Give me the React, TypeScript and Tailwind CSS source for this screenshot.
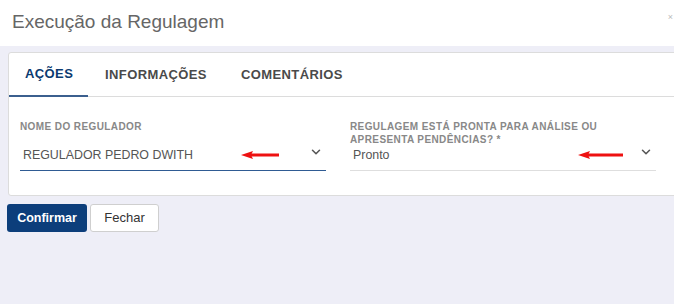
import { ChevronDown } from 'lucide-react';

const TABS = ['AÇÕES', 'INFORMAÇÕES', 'COMENTÁRIOS'];

function RedArrow({ width }: { width: number }) {
    return (
        <svg width={width} height="10" viewBox={`0 0 ${width} 10`} className="shrink-0">
            <path d={`M${width} 5 L10 5`} stroke="#ee1111" strokeWidth="3" />
            <path d="M0 5 L12 1 L10 5 L12 9 Z" fill="#ee1111" />
        </svg>
    );
}

function SelectField({
    label,
    value,
    active,
    arrow,
    arrowLeft,
}: {
    label: React.ReactNode;
    value: string;
    active?: boolean;
    arrow: number;
    arrowLeft: number;
}) {
    return (
        <div className="w-[306px] flex flex-col">
            <div className="h-[20px] text-[10px] font-bold leading-[13px] tracking-[0.4px] text-[#888]">{label}</div>
            <div
                className={`relative h-[31px] flex items-center border-b ${active ? 'border-[#2f5b93]' : 'border-[#dedede]'}`}
            >
                <span className="text-[12.4px] text-[#555] pl-[3px] pt-[1px]">{value}</span>
                <span className="absolute top-[10px]" style={{ left: arrowLeft }}>
                    <RedArrow width={arrow} />
                </span>
                <ChevronDown size={14} strokeWidth={2.6} className="absolute right-[3px] top-[5px] text-[#555]" />
            </div>
        </div>
    );
}

export default function App() {
    return (
        <div
            className="w-[674px] h-[304px] overflow-hidden bg-[#eeeef7] text-[#333]"
            style={{ fontFamily: '"Liberation Sans", Arial, sans-serif' }}
        >
            <div className="h-[46px] bg-white flex items-center justify-between pl-[12px]">
                <h1 className="text-[19px] text-[#666] leading-none pb-[4px]">Execução da Regulagem</h1>
                <span className="text-[9px] text-[#bbb] mr-[1px] mb-[10px]">×</span>
            </div>

            <div className="ml-[8px] mt-[6px] w-[680px] bg-white border border-[#dcdcdc] rounded-[3px]">
                <div className="flex border-b border-[#dcdcdc] h-[44px]">
                    {TABS.map((t, i) => (
                        <div
                            key={t}
                            className={`flex items-center text-[13px] font-bold tracking-[0.4px] ${
                                i === 0
                                    ? 'px-[16px] text-[#0b3a70] border-b-2 border-[#3b5f8e] -mb-px w-[79px]'
                                    : 'text-[#4a4a4a] px-[17px]'
                            }`}
                        >
                            {t}
                        </div>
                    ))}
                </div>
                <div className="flex gap-[24px] pl-[11px] pt-[23px] pb-[24px]">
                    <SelectField
                        label="NOME DO REGULADOR"
                        value="REGULADOR PEDRO DWITH"
                        active
                        arrow={38}
                        arrowLeft={221}
                    />
                    <SelectField
                        label={
                            <>
                                REGULAGEM ESTÁ PRONTA PARA ANÁLISE OU
                                <br />
                                APRESENTA PENDÊNCIAS? *
                            </>
                        }
                        value="Pronto"
                        arrow={45}
                        arrowLeft={228}
                    />
                </div>
            </div>

            <div className="flex gap-[3px] ml-[7px] mt-[8px]">
                <button className="h-[28px] w-[80px] rounded-[3px] bg-[#0c3e7b] text-white text-[12.5px] font-bold">
                    Confirmar
                </button>
                <button className="h-[28px] w-[69px] rounded-[3px] bg-white border border-[#cfcfcf] text-[#333] text-[13px]">
                    Fechar
                </button>
            </div>
        </div>
    );
}
